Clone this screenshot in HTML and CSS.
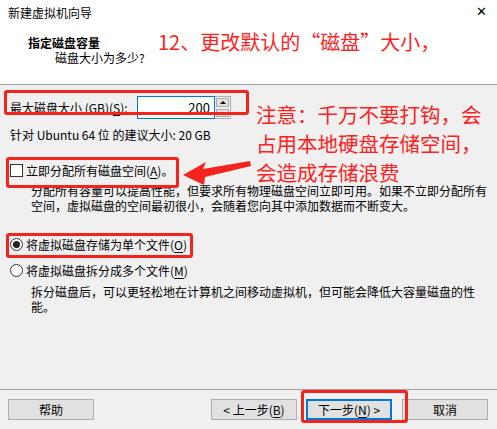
FILE: index.html
```html
<!DOCTYPE html>
<html>
<head>
    <title>新建虚拟机向导</title>
    <link rel="stylesheet" href="styles.css">
</head>
<body>
    <header class="wizard-head">
        <div class="wizard-title">新建虚拟机向导</div>
        <div class="close-btn">✕</div>
        <div class="step-title">指定磁盘容量</div>
        <div class="step-sub">磁盘大小为多少?</div>
    </header>

    <main class="wizard-body">
        <div class="size-row">
            <label class="size-label">最大磁盘大小 (GB)(<u>S</u>):</label>
            <div class="spin">
                <div class="spin-input">200</div>
                <div class="spin-btns">
                    <span class="spin-up"></span>
                    <span class="spin-down"></span>
                </div>
            </div>
        </div>
        <div class="hint">针对 Ubuntu 64 位 的建议大小: 20 GB</div>

        <div class="check-row">
            <span class="check-box"></span>
            <span>立即分配所有磁盘空间(<u>A</u>)。</span>
        </div>
        <p class="desc">分配所有容量可以提高性能，但要求所有物理磁盘空间立即可用。如果不立即分配所有空间，虚拟磁盘的空间最初很小，会随着您向其中添加数据而不断变大。</p>

        <div class="radio-row first">
            <span class="radio checked"></span>
            <span>将虚拟磁盘存储为单个文件(<u>O</u>)</span>
        </div>
        <div class="radio-row">
            <span class="radio"></span>
            <span>将虚拟磁盘拆分成多个文件(<u>M</u>)</span>
        </div>
        <p class="desc second">拆分磁盘后，可以更轻松地在计算机之间移动虚拟机，但可能会降低大容量磁盘的性能。</p>
    </main>

    <footer class="wizard-foot">
        <button class="btn">帮助</button>
        <div class="spacer"></div>
        <button class="btn">&lt; 上一步(<u>B</u>)</button>
        <button class="btn default">下一步(<u>N</u>) &gt;</button>
        <button class="btn cancel">取消</button>
    </footer>

    <!-- annotations -->
    <div class="note note-top">12、更改默认的“磁盘”大小，</div>
    <div class="note note-side">注意：千万不要打钩，会<br>占用本地硬盘存储空间，<br>会造成存储浪费</div>
    <div class="mark mark-size"></div>
    <div class="mark mark-check"></div>
    <div class="mark mark-radio"></div>
    <div class="mark mark-next"></div>
    <svg class="arrow" width="497" height="429" viewBox="0 0 497 429">
        <polygon points="183,175 206,162 203,169 250,161 251,166 205,177 204,185" fill="#f5231d"/>
    </svg>
</body>
</html>
```

FILE: styles.css
```css
body {
    margin: 0;
    width: 497px;
    height: 429px;
    overflow: hidden;
    background-color: #f0f0f0;
    font-family: "Noto Sans CJK SC", "Liberation Sans", sans-serif;
    font-size: 12px;
    color: #000;
    display: flex;
    flex-direction: column;
    position: relative;
}

u {
    text-decoration: underline;
    text-underline-offset: 2px;
}

.wizard-head {
    background-color: #fff;
    height: 84px;
    border-bottom: 1px solid #a0a0a0;
    position: relative;
    box-sizing: border-box;
    height: 85px;
}

.wizard-title {
    position: absolute;
    left: 8px;
    top: 5px;
    line-height: 16px;
}

.close-btn {
    position: absolute;
    left: 476px;
    top: 4px;
    font-size: 13px;
    line-height: 16px;
    font-family: "DejaVu Sans", sans-serif;
}

.step-title {
    position: absolute;
    left: 28px;
    top: 35px;
    font-weight: bold;
    line-height: 16px;
}

.step-sub {
    position: absolute;
    left: 55px;
    top: 50px;
    line-height: 16px;
}

.wizard-body {
    flex: 1;
    padding: 0 10px;
}

.size-row {
    display: flex;
    align-items: center;
    margin-top: 11px;
    height: 23px;
}

.size-label {
    width: 127px;
}

.spin {
    display: flex;
    height: 23px;
}

.spin-input {
    width: 78px;
    box-sizing: border-box;
    background: #fff;
    border: 1px solid #0078d7;
    text-align: right;
    padding-right: 4px;
    line-height: 21px;
    font-size: 13px;
}

.spin-btns {
    width: 16px;
    box-sizing: border-box;
    border: 1px solid #adadad;
    border-left: none;
    display: flex;
    flex-direction: column;
    background: #f0f0f0;
}

.spin-btns span {
    flex: 1;
    margin: 1px;
    background: #e1e1e1;
    border: 1px solid #adadad;
    position: relative;
}

.spin-up::after,
.spin-down::after {
    content: "";
    position: absolute;
    left: 3px;
    border-left: 3px solid transparent;
    border-right: 3px solid transparent;
}

.spin-up::after {
    top: 2px;
    border-bottom: 3px solid #000;
}

.spin-down::after {
    top: 2px;
    border-top: 3px solid #000;
}

.hint {
    margin-top: 8px;
    line-height: 15px;
}

.check-row,
.radio-row {
    display: flex;
    align-items: center;
    gap: 3px;
    height: 15px;
    margin-top: 21px;
}

.check-box {
    width: 13px;
    height: 13px;
    box-sizing: border-box;
    border: 1px solid #333;
    background: #fff;
}

.desc {
    margin: 5px 0 0 21px;
    line-height: 15px;
}

.desc.second {
    margin-top: 6px;
}

.radio-row.first {
    margin-top: 24px;
}

.radio-row {
    margin-top: 11px;
}

.radio {
    width: 13px;
    height: 13px;
    box-sizing: border-box;
    border: 1px solid #333;
    border-radius: 50%;
    background: #fff;
    position: relative;
}

.radio.checked::after {
    content: "";
    position: absolute;
    left: 2px;
    top: 2px;
    width: 7px;
    height: 7px;
    border-radius: 50%;
    background: #222;
}

.wizard-foot {
    border-top: 1px solid #a0a0a0;
    height: 40px;
    box-sizing: border-box;
    padding: 9px 9px 9px 8px;
    display: flex;
    align-items: flex-start;
}

.spacer {
    flex: 1;
}

.btn {
    width: 86px;
    height: 21px;
    box-sizing: border-box;
    background: #e1e1e1;
    border: 1px solid #adadad;
    font-family: "Noto Sans CJK SC", "Liberation Sans", sans-serif;
    font-size: 12px;
    padding: 0;
    line-height: 17px;
}

.btn.default {
    border: 2px solid #0078d7;
    margin-left: 9px;
}

.btn.cancel {
    margin-left: 10px;
}

.note {
    position: absolute;
    color: #ff2222;
    font-size: 20px;
    line-height: 29px;
}

.note-top {
    left: 158px;
    top: 27px;
}

.note-side {
    left: 256px;
    top: 100px;
    font-size: 20.5px;
}

.mark {
    position: absolute;
    border: 3px solid #f5231d;
    border-radius: 3px;
    box-sizing: border-box;
}

.mark-size {
    left: 4px;
    top: 90px;
    width: 245px;
    height: 25px;
}

.mark-check {
    left: 6px;
    top: 157px;
    width: 173px;
    height: 31px;
}

.mark-radio {
    left: 6px;
    top: 233px;
    width: 187px;
    height: 25px;
}

.mark-next {
    left: 301px;
    top: 390px;
    width: 107px;
    height: 33px;
}

.arrow {
    position: absolute;
    left: 0;
    top: 0;
}
```
